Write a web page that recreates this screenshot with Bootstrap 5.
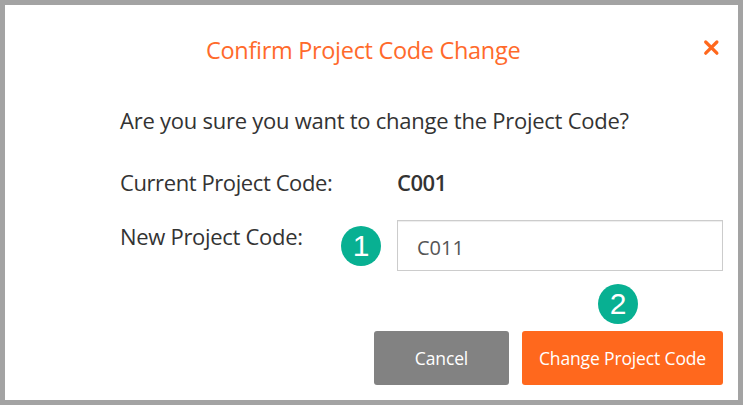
<!DOCTYPE html>
<html lang="en">
<head>
<meta charset="utf-8">
<meta name="viewport" content="width=device-width, initial-scale=1">
<title>Confirm Project Code Change</title>
<link href="https://cdn.jsdelivr.net/npm/bootstrap@5.3.0/dist/css/bootstrap.min.css" rel="stylesheet">
<style>
body{font-family:"Segoe UI","Open Sans",sans-serif;color:#333;font-size:22px;line-height:30px;font-weight:370}
.dialog-frame{height:405px;border:5px solid #a3a3a3;padding:0 15px 0 115px}
.dialog-head{height:91px;padding-top:30px}
.dialog-title{color:#ff6a2b;font-size:23.5px;line-height:30px;padding-left:86px;font-weight:370;letter-spacing:-.31px}
.close-btn{width:17px;height:17px;margin:4px 3px 0 0}
.question{height:62px;padding-top:9px}
.code-row{height:62px;padding-top:9px}
.label-col{width:277px}
.t-question{letter-spacing:-.25px}
.t-current{letter-spacing:-.41px}
.t-new{letter-spacing:-.3px;padding-top:1px}
.t-code{letter-spacing:-.5px}
.new-row{height:51px}
.step{width:40px;height:40px;background:#08b092;color:#fff;border-radius:50%;font-family:"Liberation Sans",Arial,sans-serif;font-size:30px;line-height:40px;text-align:center}
.step-one{margin-top:6px}
.code-input{width:326px;height:51px;border:1px solid #ccc;border-radius:0;font-size:20px;font-weight:370;color:#555;padding:3px 18px 0 19px;box-shadow:inset 0 1px 1px rgba(0,0,0,.075)}
.step-row{height:60px;padding:13px 85px 0 0}
.actions{gap:13px}
.act{height:54px;border:0;border-radius:3px;font-size:17.5px;font-weight:370;letter-spacing:-.14px;color:#fff;padding:1px 0 0}
.act-cancel{width:135px;background:#828282}
.act-change{width:201px;background:#ff681d}
</style>
</head>
<body>
<main class="dialog-frame bg-white overflow-hidden text-nowrap">
  <header class="dialog-head d-flex justify-content-between align-items-start">
    <h1 class="dialog-title mb-0">Confirm Project Code Change</h1>
    <button class="close-btn btn p-0 border-0 d-flex" aria-label="Close"><svg width="17" height="17" viewBox="0 0 17 17"><path d="M2.7 3 13.9 14.2M13.9 3 2.7 14.2" stroke="#ff681d" stroke-width="3.2" stroke-linecap="round"/></svg></button>
  </header>
  <p class="question mb-0"><span class="t-question">Are you sure you want to change the Project Code?</span></p>
  <div class="code-row d-flex">
    <div class="label-col"><span class="t-current">Current Project Code:</span></div>
    <span class="t-code fw-semibold">C001</span>
  </div>
  <div class="new-row d-flex">
    <div class="label-col d-flex justify-content-between pe-3">
      <label for="code" class="t-new">New Project Code:</label>
      <span class="step step-one">1</span>
    </div>
    <input id="code" class="code-input form-control" value="C011">
  </div>
  <div class="step-row d-flex justify-content-end"><span class="step">2</span></div>
  <footer class="d-flex justify-content-end actions">
    <button class="act act-cancel btn">Cancel</button>
    <button class="act act-change btn">Change Project Code</button>
  </footer>
</main>
<script src="https://cdn.jsdelivr.net/npm/bootstrap@5.3.0/dist/js/bootstrap.bundle.min.js"></script>
</body>
</html>
